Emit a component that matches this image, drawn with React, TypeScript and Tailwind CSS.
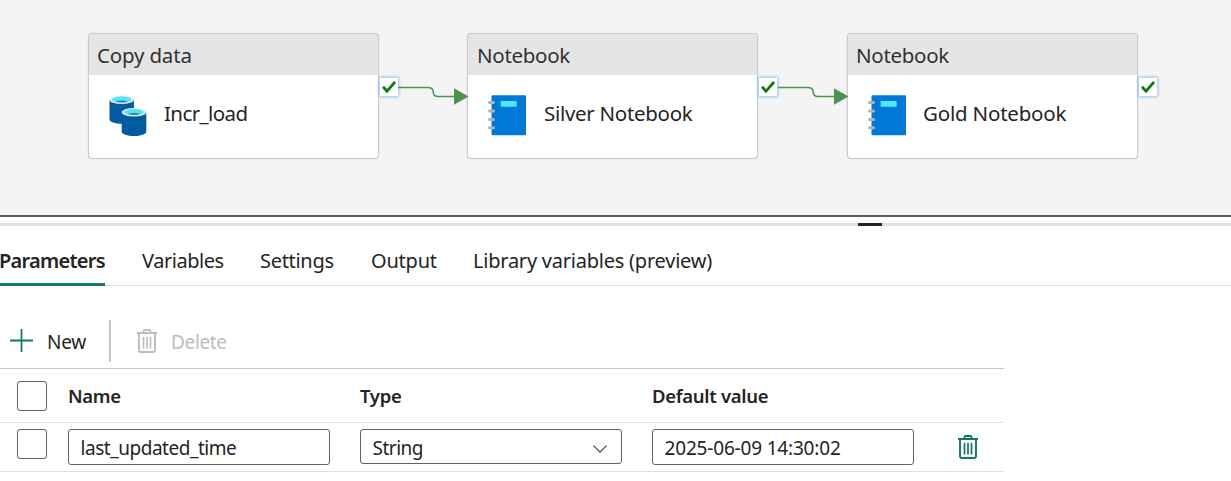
import React from "react";

function CopyDataIcon() {
  return (
    <svg width="38" height="42" viewBox="0 0 38 42" className="-mt-[2px] block">
      <path d="M0.500 5v19.500c0 2.300 5.500 4.300 12.200 4.300s12.200-2 12.200-4.300V5z" fill="#005ba1" />
      <ellipse cx="12.700" cy="4.700" rx="12.200" ry="4.300" fill="#e8e8e8" />
      <ellipse cx="12.700" cy="4.500" rx="9.800" ry="3" fill="#50e6ff" />
      <path d="M6.500 6.500c1.700-.8 3.800-1.100 6.200-1.100s4.500.3 6.200 1.100c-1.700.6-3.800.9-6.200.9s-4.500-.3-6.200-.9z" fill="#198ab3" />
      <path d="M12.700 17.500v19.200c0 2.300 5.500 4.300 12.300 4.300s12.300-2 12.300-4.300V17.500z" fill="#005ba1" />
      <ellipse cx="25" cy="17.200" rx="12.300" ry="4.300" fill="#e8e8e8" />
      <ellipse cx="25" cy="17" rx="9.800" ry="3" fill="#50e6ff" />
      <path d="M18.800 19c1.700-.8 3.800-1.100 6.200-1.100s4.500.3 6.200 1.100c-1.700.6-3.800.9-6.200.9s-4.500-.3-6.200-.9z" fill="#198ab3" />
    </svg>
  );
}

function NotebookIcon() {
  return (
    <svg width="38" height="42" viewBox="0 0 38 42" className="-mt-[2px] block">
      <rect x="3.500" y="0.200" width="34.500" height="40" rx="1.300" fill="#0078d7" />
      <rect x="12.700" y="6" width="16" height="5.800" rx="0.400" fill="#50e6ff" />
      {[7.500, 16, 24.500, 32.700].map((y) => (
        <rect key={y} x="0" y={y - 1.500} width="7" height="3" rx="1.500" fill="#b3b3b3" />
      ))}
    </svg>
  );
}

function TrashIcon({ className }: { className: string }) {
  return (
    <svg width="20" height="24" viewBox="0 0 20 24" fill="none" stroke="currentColor" className={className}>
      <path d="M0 4h20" strokeWidth="2" />
      <path d="M6.500 3.500V2Q6.500 1 7.500 1h5Q13.500 1 13.500 2v1.500" strokeWidth="1.800" />
      <path d="M2 4v17.500Q2 23 3.500 23h13Q18 23 18 21.500V4" strokeWidth="1.900" />
      <path d="M6.500 8v11.500M10 8v11.500M13.500 8v11.500" strokeWidth="1.700" />
    </svg>
  );
}

interface ActivityProps {
  kind: string;
  kindClass: string;
  name: string;
  nameClass: string;
  place: string;
  icon: React.ReactNode;
}

function Activity({ kind, kindClass, name, nameClass, place, icon }: ActivityProps) {
  return (
    <div className={`absolute top-[33px] ${place}`}>
      <div className="h-[126px] w-[291px] overflow-hidden rounded-[4px] border border-[#cacaca] bg-white shadow-[0_0_1px_#bbb]">
        <div className="flex h-[41px] items-center bg-[#e5e5e5] pt-px pl-2 text-[20.500px] text-[#323130]">
          <span className={kindClass}>{kind}</span>
        </div>
        <div className="flex h-[83px] items-center pl-5">
          {icon}
          <span className={`-mt-[7px] ml-[17px] text-[20.500px] text-[#252423] ${nameClass}`}>{name}</span>
        </div>
      </div>
      <div className="absolute top-[45px] left-[292px] flex size-[18px] items-center justify-center bg-white shadow-[0_0_3px_1px_#8fc3f0]">
        <svg width="14" height="12" viewBox="0 0 14 12" fill="none" className="block">
          <path d="M1 5.800 5 10.200 13 1" stroke="#107c10" strokeWidth="2.800" />
        </svg>
      </div>
    </div>
  );
}

function Connector({ place }: { place: string }) {
  return (
    <svg width="71" height="24" viewBox="0 0 71 24" fill="none" className={`absolute top-[81px] ${place}`}>
      <path d="M0 6.500h30q5 0 5.200 4.500t4.800 4.500h16" stroke="#4a9353" strokeWidth="1.500" />
      <path d="M56 7.300v16.500l14.500-8.300z" fill="#4a9353" />
    </svg>
  );
}

const tabs = [
  { label: "Variables", className: "ml-[37px] w-[82px] tracking-[-0.450px]" },
  { label: "Settings", className: "ml-9 w-[75px] tracking-[-0.300px]" },
  { label: "Output", className: "ml-9 w-[66px] tracking-[-0.200px]" },
  { label: "Library variables (preview)", className: "ml-9 tracking-[-0.230px]" },
];

function Checkbox({ className }: { className: string }) {
  return <div role="checkbox" aria-checked="false" className={`ml-[17px] size-[30px] shrink-0 rounded-[3px] border border-[#616161] ${className}`} />;
}

export default function App() {
  return (
    <div className="flex h-[481px] w-[1231px] flex-col overflow-hidden bg-white font-['Noto_Sans','Open_Sans',sans-serif] whitespace-nowrap text-[#242424]">
      <div className="relative h-[215px] shrink-0 bg-[#f4f4f4]">
        <Activity place="left-[88px]" kind="Copy data" kindClass="tracking-[-0.180px]" name="Incr_load" nameClass="tracking-[-0.600px]" icon={<CopyDataIcon />} />
        <Activity place="left-[467px]" kind="Notebook" kindClass="ml-px tracking-[-0.300px]" name="Silver Notebook" nameClass="pl-px tracking-[-0.300px]" icon={<NotebookIcon />} />
        <Activity place="left-[847px]" kind="Notebook" kindClass="tracking-[-0.300px]" name="Gold Notebook" nameClass="tracking-[-0.200px]" icon={<NotebookIcon />} />
        <Connector place="left-[398px]" />
        <Connector place="left-[778px]" />
      </div>

      <div className="h-[2px] shrink-0 bg-[#605e5c]" />
      <div className="mt-[6px] flex h-[3px] shrink-0 bg-[#e0e0e0] pl-[858px]">
        <div className="w-6 bg-[#242424]" />
      </div>

      <div className="flex h-[60px] shrink-0 border-b border-[#e0e0e0] text-[20px]">
        <div className="-mb-px flex w-[105px] items-center border-b-[3px] border-[#117865] pt-[13px] font-semibold">
          <span className="-ml-px tracking-[-0.750px]">Parameters</span>
        </div>
        {tabs.map((tab) => (
          <div key={tab.label} className={`flex items-center pt-[11px] ${tab.className}`}>
            {tab.label}
          </div>
        ))}
      </div>

      <div className="mt-[34px] flex h-[42px] shrink-0 items-center text-[19px]">
        <svg width="23" height="23" viewBox="0 0 23 23" className="-mt-[2px] ml-[10px] text-[#117865]" fill="none" stroke="currentColor" strokeWidth="1.800">
          <path d="M11.500 0v23M0 11.500h23" />
        </svg>
        <span className="mt-[2px] ml-[14px] w-[61px] tracking-[-0.300px]">New</span>
        <div className="ml-px h-[42px] w-[2px] bg-[#c8c6c4]" />
        <TrashIcon className="-mt-px ml-[26px] text-[#bdbdbd]" />
        <span className="mt-[2px] ml-[14px] tracking-[-0.350px] text-[#bdbdbd]">Delete</span>
      </div>

      <div className="mt-[6px] w-[1004px] shrink-0 border-t border-[#c8c6c4] text-[19px]">
        <div className="flex h-[54px] items-start border-b border-[#e0e0e0] text-[18.500px] leading-[54px] font-semibold">
          <Checkbox className="mt-3" />
          <span className="ml-[21px] w-[292px] tracking-[-0.350px]">Name</span>
          <span className="w-[292px] tracking-[-0.300px]">Type</span>
          <span className="tracking-[-0.300px]">Default value</span>
        </div>
        <div className="flex h-[49px] items-start border-b border-[#e0e0e0] pt-[6px]">
          <Checkbox className="" />
          <div className="ml-[21px] flex h-[36px] w-[262px] items-center rounded-[3px] border border-[#616161] pt-[3px] pl-[11.500px]">
            <span className="tracking-[-0.460px]">last_updated_time</span>
          </div>
          <div className="ml-[30px] flex h-[35px] w-[262px] items-center justify-between rounded-[3px] border border-[#616161] pt-[4px] pr-[14px] pl-[11.500px]">
            <span className="tracking-[-0.500px]">String</span>
            <svg width="14" height="8" viewBox="0 0 14 8" fill="none" className="mt-px" stroke="#424242" strokeWidth="1.200">
              <path d="M0.500 0.700 7 7.200 13.500 0.700" />
            </svg>
          </div>
          <div className="ml-[30px] flex h-[36px] w-[262px] items-center rounded-[3px] border border-[#616161] pt-[3px] pl-[11.500px]">
            <span className="tracking-[-0.180px]">2025-06-09 14:30:02</span>
          </div>
          <TrashIcon className="mt-[6px] ml-[44px] text-[#117865]" />
        </div>
      </div>
    </div>
  );
}
